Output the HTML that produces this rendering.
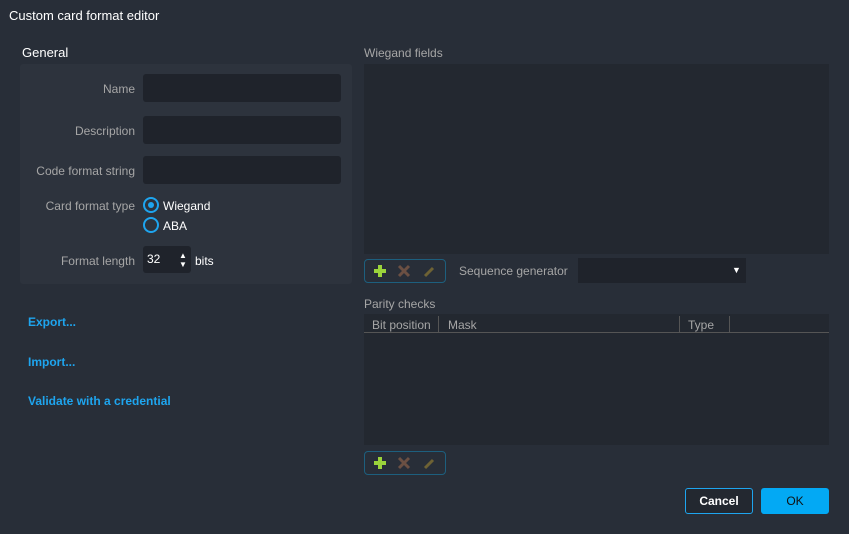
<!DOCTYPE html>
<html><head><style>
body{margin:0;width:849px;height:534px;background:#282e38;font-family:"Liberation Sans",sans-serif;font-size:12px;color:#fff;position:relative;overflow:hidden}
.a{position:absolute}
.lbl{color:#a6a6a6;text-align:right;width:115px;left:20px}
.inp{background:#1f232b;border-radius:3px;left:143px;width:198px;height:28px}
.link{color:#1ea5ef;font-weight:bold;left:28px}
.tb{border:1px solid #1d5f7e;border-radius:4px;width:80px;height:22px;left:364px}
</style></head><body>
<div class="a" style="left:9px;top:8px;font-size:13px">Custom card format editor</div>
<div class="a" style="left:22px;top:45px;font-size:13px">General</div>
<div class="a" style="left:20px;top:64px;width:332px;height:220px;background:#2d333d;border-radius:3px"></div>
<div class="a lbl" style="top:82px">Name</div><div class="a inp" style="top:74px"></div>
<div class="a lbl" style="top:124px">Description</div><div class="a inp" style="top:116px"></div>
<div class="a lbl" style="top:164px">Code format string</div><div class="a inp" style="top:156px"></div>
<div class="a lbl" style="top:199px">Card format type</div>
<div class="a" style="left:143px;top:197px;width:12px;height:12px;border:2px solid #1ea5ef;border-radius:50%"><div style="margin:3px;width:6px;height:6px;background:#1ea5ef;border-radius:50%"></div></div>
<div class="a" style="left:163px;top:199px">Wiegand</div>
<div class="a" style="left:143px;top:217px;width:12px;height:12px;border:2px solid #1ea5ef;border-radius:50%"></div>
<div class="a" style="left:163px;top:219px">ABA</div>
<div class="a lbl" style="top:254px">Format length</div>
<div class="a" style="left:143px;top:246px;width:48px;height:27px;background:#1f232b;border-radius:3px"></div>
<div class="a" style="left:147px;top:252px">32</div>
<div class="a" style="left:179px;top:251px;font-size:8px;line-height:9px">▲<br>▼</div>
<div class="a" style="left:195px;top:254px">bits</div>
<div class="a link" style="top:315px">Export...</div>
<div class="a link" style="top:355px">Import...</div>
<div class="a link" style="top:394px">Validate with a credential</div>
<div class="a" style="left:364px;top:46px;color:#a6a6a6">Wiegand fields</div>
<div class="a" style="left:364px;top:64px;width:465px;height:190px;background:#232830"></div>
<div class="a tb" style="top:259px"></div>
<svg class="a" style="left:364px;top:259px" width="82" height="24"><path d="M16 6v12M10 12h12" stroke="#9bd43b" stroke-width="4"/><path d="M35 7l10 10M45 7l-10 10" stroke="#6b5043" stroke-width="3"/><path d="M61 17l8-8" stroke="#6e6234" stroke-width="3"/></svg>
<div class="a" style="left:459px;top:264px;color:#a6a6a6">Sequence generator</div>
<div class="a" style="left:578px;top:258px;width:168px;height:25px;background:#1f232b"></div>
<div class="a" style="left:732px;top:265px;font-size:9px">▼</div>
<div class="a" style="left:364px;top:297px;color:#a6a6a6">Parity checks</div>
<div class="a" style="left:364px;top:314px;width:465px;height:131px;background:#232830"></div>
<div class="a" style="left:364px;top:332px;width:465px;height:1px;background:#555"></div>
<div class="a" style="left:438px;top:316px;width:1px;height:16px;background:#555"></div>
<div class="a" style="left:679px;top:316px;width:1px;height:16px;background:#555"></div>
<div class="a" style="left:729px;top:316px;width:1px;height:16px;background:#555"></div>
<div class="a" style="left:372px;top:318px;color:#a6a6a6">Bit position</div>
<div class="a" style="left:448px;top:318px;color:#a6a6a6">Mask</div>
<div class="a" style="left:688px;top:318px;color:#a6a6a6">Type</div>
<div class="a tb" style="top:451px"></div>
<svg class="a" style="left:364px;top:451px" width="82" height="24"><path d="M16 6v12M10 12h12" stroke="#9bd43b" stroke-width="4"/><path d="M35 7l10 10M45 7l-10 10" stroke="#6b5043" stroke-width="3"/><path d="M61 17l8-8" stroke="#6e6234" stroke-width="3"/></svg>
<div class="a" style="left:685px;top:488px;width:66px;height:24px;border:1px solid #1ea5ef;border-radius:3px;background:#232830;text-align:center;line-height:24px;font-weight:bold">Cancel</div>
<div class="a" style="left:761px;top:488px;width:68px;height:26px;background:#03a9f4;border-radius:3px;text-align:center;line-height:26px;color:#111">OK</div>
</body></html>
